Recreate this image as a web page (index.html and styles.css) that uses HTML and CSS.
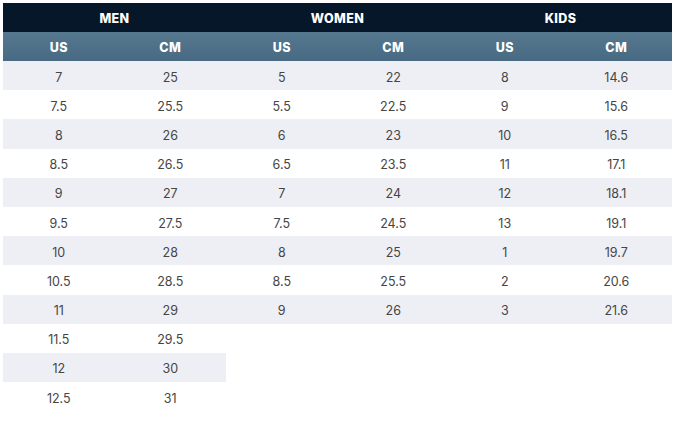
FILE: index.html
```html
<!DOCTYPE html>
<html>
<head>
<meta charset="utf-8">
<link rel="stylesheet" href="styles.css">
</head>
<body>
<table class="size-table">
  <thead>
    <tr class="group-row">
      <th colspan="2">MEN</th>
      <th colspan="2">WOMEN</th>
      <th colspan="2">KIDS</th>
    </tr>
    <tr class="unit-row">
      <th>US</th><th>CM</th><th>US</th><th>CM</th><th>US</th><th>CM</th>
    </tr>
  </thead>
  <tbody>
    <tr class="odd"><td>7</td><td>25</td><td>5</td><td>22</td><td>8</td><td>14.6</td></tr>
    <tr><td>7.5</td><td>25.5</td><td>5.5</td><td>22.5</td><td>9</td><td>15.6</td></tr>
    <tr class="odd"><td>8</td><td>26</td><td>6</td><td>23</td><td>10</td><td>16.5</td></tr>
    <tr><td>8.5</td><td>26.5</td><td>6.5</td><td>23.5</td><td>11</td><td>17.1</td></tr>
    <tr class="odd"><td>9</td><td>27</td><td>7</td><td>24</td><td>12</td><td>18.1</td></tr>
    <tr><td>9.5</td><td>27.5</td><td>7.5</td><td>24.5</td><td>13</td><td>19.1</td></tr>
    <tr class="odd"><td>10</td><td>28</td><td>8</td><td>25</td><td>1</td><td>19.7</td></tr>
    <tr><td>10.5</td><td>28.5</td><td>8.5</td><td>25.5</td><td>2</td><td>20.6</td></tr>
    <tr class="odd"><td>11</td><td>29</td><td>9</td><td>26</td><td>3</td><td>21.6</td></tr>
    <tr><td>11.5</td><td>29.5</td><td class="empty"></td><td class="empty"></td><td class="empty"></td><td class="empty"></td></tr>
    <tr class="odd"><td>12</td><td>30</td><td class="empty"></td><td class="empty"></td><td class="empty"></td><td class="empty"></td></tr>
    <tr><td>12.5</td><td>31</td><td class="empty"></td><td class="empty"></td><td class="empty"></td><td class="empty"></td></tr>
  </tbody>
</table>
</body>
</html>
```

FILE: styles.css
```css
html, body {
  margin: 0;
  padding: 0;
  background: #ffffff;
}
body {
  padding: 3px 0 0 3px;
}
.size-table {
  border-collapse: collapse;
  table-layout: fixed;
  width: 669px;
  font-family: "Inter", "Liberation Sans", sans-serif;
}
.size-table th,
.size-table td {
  padding: 0;
  text-align: center;
  width: 111.5px;
  box-sizing: border-box;
}
.group-row th {
  height: 29px;
  padding-top: 2px;
  background: #06172a;
  color: #ffffff;
  font-size: 12.5px;
  font-weight: 800;
  letter-spacing: 0.4px;
}
.unit-row th {
  height: 29px;
  padding-top: 2px;
  background: linear-gradient(#567990, #476a82);
  color: #ffffff;
  font-size: 12.5px;
  font-weight: 800;
  letter-spacing: 0.4px;
}
.size-table td {
  height: 29.2px;
  padding-top: 3px;
  font-size: 12.5px;
  font-weight: 400;
  color: #454545;
}
.size-table tr.odd td {
  background: #eeeff5;
}
.size-table tr.odd td.empty {
  background: #ffffff;
}
```
